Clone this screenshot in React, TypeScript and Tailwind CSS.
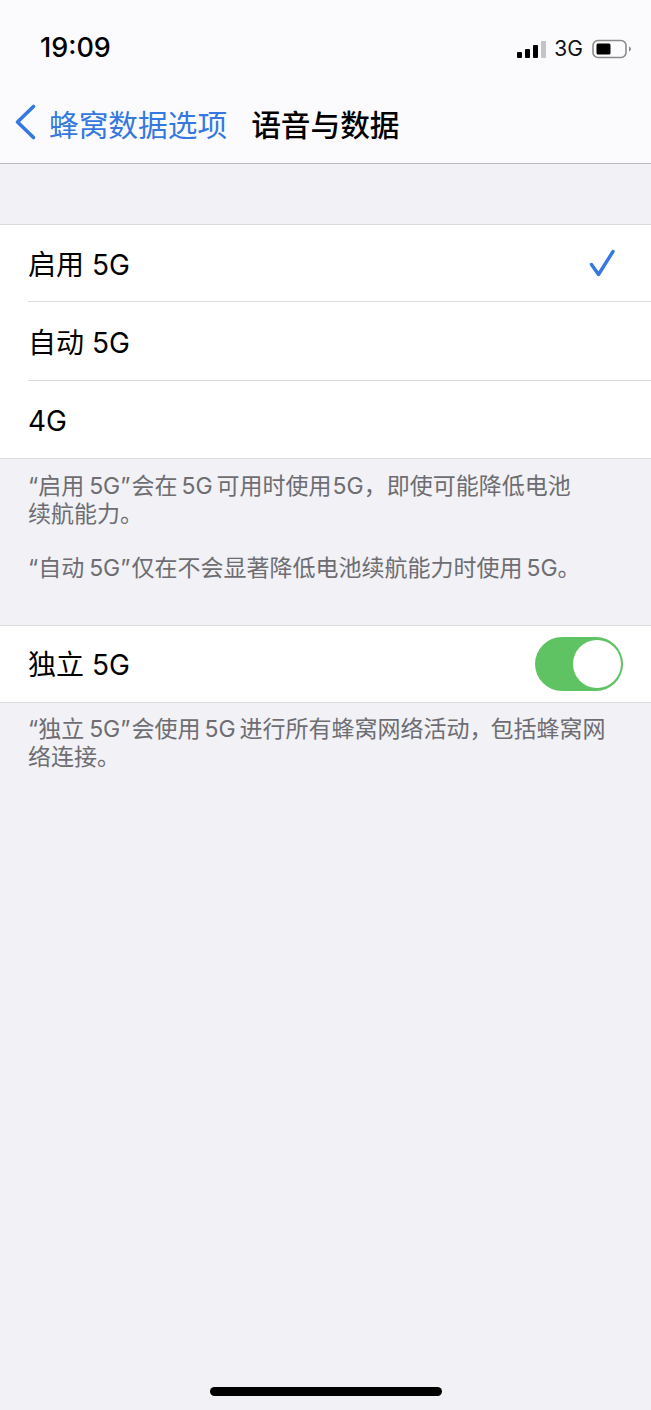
import React from 'react'

function StatusBar() {
    return (
        <div className="h-[74px] flex items-end justify-between pl-10 pr-[19px] pb-[11px]">
            <span className="text-[27px] leading-[30px] font-medium text-black">19:09</span>
            <div className="flex items-center gap-[9px] pb-[2px]">
                <svg width="29" height="20" viewBox="0 0 29 20" className="-mr-[1px]">
                    <rect x="0" y="13" width="5" height="6" rx="1" fill="#000" />
                    <rect x="8" y="10" width="5" height="9" rx="1" fill="#000" />
                    <rect x="16" y="6" width="5" height="13" rx="1" fill="#000" />
                    <rect x="24" y="2" width="5" height="17" rx="1" fill="#c4c4c6" />
                </svg>
                <span className="text-[21px] leading-6 text-[#111]">3G</span>
                <svg width="40" height="20" viewBox="0 0 40 20">
                    <rect x="1" y="1.500" width="33" height="17" rx="5" fill="none" stroke="#8a8a8c" strokeWidth="1.600" />
                    <rect x="4.500" y="4.500" width="14" height="11" rx="1.500" fill="#000" />
                    <path d="M37 7.500c1.300.4 2 1.300 2 2.500s-.7 2.100-2 2.500z" fill="#8a8a8c" />
                </svg>
            </div>
        </div>
    )
}

function Row({ label, className, last, children }: { label: string; className: string; last?: boolean; children?: React.ReactNode }) {
    return (
        <div className="pl-7 bg-white">
            <div className={`flex items-center justify-between text-[28px] text-black ${className}`}>
                <span className={last ? 'pt-[2px]' : 'pt-[4px]'}>{label}</span>
                {children}
            </div>
        </div>
    )
}

function Footer({ children }: { children: React.ReactNode }) {
    return <p className="px-7 text-[23px] leading-[28px] text-[#6d6d72]">{children}</p>
}

// 5G inside footer text sits tighter against the CJK than a full space
function G({ left = 4, right = 0 }: { left?: 1 | 4 | 5; right?: 0 | 4 }) {
    const l = left === 1 ? 'ml-[1px]' : left === 5 ? 'ml-[5px]' : 'ml-[4px]'
    return <span className={`${l} ${right === 4 ? 'mr-[4px]' : ''}`}>5G</span>
}

export default function App() {
    return (
        <div
            className="w-[651px] h-[1410px] bg-[#f1f1f6] relative overflow-hidden"
            style={{ fontFamily: 'Inter, "Noto Sans CJK SC", sans-serif' }}
        >
            <header className="h-[164px] bg-[#fbfbfd] border-b border-[#b9b9bb]">
                <StatusBar />
                <div className="h-[89px] flex items-start pt-[30px] pl-[14px]">
                    <svg width="23" height="38" viewBox="0 0 23 38" className="-mt-[1px] text-[#3478e0]">
                        <path d="M19.500 3.500 3.500 19l16 15.500" fill="none" stroke="currentColor" strokeWidth="3.600" strokeLinecap="round" strokeLinejoin="round" />
                    </svg>
                    <span className="ml-[12px] text-[29.700px] leading-[42px] text-[#3478e0]">蜂窝数据选项</span>
                    <span className="ml-6 text-[29.700px] leading-[42px] font-medium text-black">语音与数据</span>
                </div>
            </header>

            <section className="mt-[60px] border-t border-b border-[#dcdcde]">
                <Row label="启用 5G" className="h-[77px] border-b border-[#dcdcde]">
                    <svg width="30" height="30" viewBox="0 0 30 30" className="mr-[34px] text-[#3478e0]">
                        <path d="M4.500 16.500 11.500 26.500 26 3.500" fill="none" stroke="currentColor" strokeWidth="3.400" strokeLinecap="round" strokeLinejoin="round" />
                    </svg>
                </Row>
                <Row label="自动 5G" className="h-[79px] border-b border-[#dcdcde]" />
                <Row label="4G" className="h-[77px]" last />
            </section>

            <div className="pt-[13px]">
                <Footer>
                    “启用<G left={5} />”<span className="ml-[1px]">会</span>在<G right={4} />可用时使用<G left={1} />，即使可能降低电池
                    <br />
                    续航能力。
                </Footer>
                <div className="h-[26px]" />
                <Footer>
                    “自动<G left={5} />”<span className="ml-[1px]">仅</span>在不会显著降低电池续航能力时使用<G />。
                </Footer>
            </div>

            <section className="mt-[43px] border-t border-b border-[#dcdcde] bg-white">
                <div className="h-[76px] pl-7 pr-7 flex items-center justify-between text-[28px] text-black">
                    <span className="pt-[2px]">独立 5G</span>
                    <div className="w-[88px] h-[54px] rounded-full bg-[#5fc263] flex items-center justify-end pr-[2px]">
                        <div className="w-[48px] h-[48px] rounded-full bg-white" />
                    </div>
                </div>
            </section>

            <div className="pt-[12px]">
                <Footer>
                    “独立<G left={5} />”<span className="ml-[1px]">会</span>使用<G right={4} />进行所有蜂窝网络活动<span className="-mr-[2px]">，</span>包括蜂窝网
                    <br />
                    络连接。
                </Footer>
            </div>

            <div className="absolute left-[210px] top-[1387px] w-[232px] h-[9px] rounded-full bg-black" />
        </div>
    )
}
